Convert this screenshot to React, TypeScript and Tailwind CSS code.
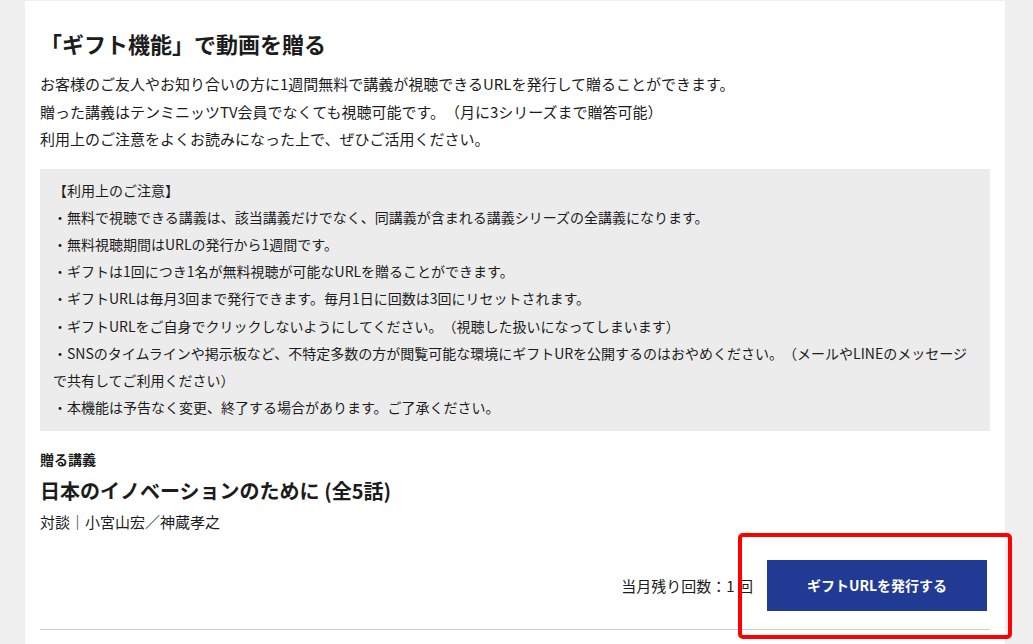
import React from 'react';

const notes = [
  '・無料で視聴できる講義は、該当講義だけでなく、同講義が含まれる講義シリーズの全講義になります。',
  '・無料視聴期間はURLの発行から1週間です。',
  '・ギフトは1回につき1名が無料視聴が可能なURLを贈ることができます。',
  '・ギフトURLは毎月3回まで発行できます。毎月1日に回数は3回にリセットされます。',
  '・ギフトURLをご自身でクリックしないようにしてください。（視聴した扱いになってしまいます）',
];

export default function App() {
  return (
    <div
      className="min-h-screen bg-[#f0f0f0] pt-px text-[#1c1c1c] [text-spacing-trim:space-all]"
      style={{ fontFamily: '"Noto Sans CJK JP", "Noto Sans", sans-serif' }}
    >
      <div className="relative ml-[25px] w-[980px] bg-white px-[15px] pt-[26px] pb-[20px]">
        <h2 className="text-[22px] font-bold leading-[32px]">「ギフト機能」で動画を贈る</h2>

        <div className="mt-[11px] text-[15px] leading-[27.5px]">
          <p>お客様のご友人やお知り合いの方に1週間無料で講義が視聴できるURLを発行して贈ることができます。</p>
          <p>贈った講義はテンミニッツTV会員でなくても視聴可能です。（月に3シリーズまで贈答可能）</p>
          <p>利用上のご注意をよくお読みになった上で、ぜひご活用ください。</p>
        </div>

        <div className="mt-[16px] bg-[#ececec] px-[13px] pt-[8px] pb-[10px] text-[14px] leading-[27.2px]">
          <p>【利用上のご注意】</p>
          {notes.map((n) => (
            <p key={n}>{n}</p>
          ))}
          <p>
            ・SNSのタイムラインや掲示板など、不特定多数の方が閲覧可能な環境にギフトURを公開するのはおやめください。（メールやLINEのメッセージ
            <br />
            で共有してご利用ください）
          </p>
          <p>・本機能は予告なく変更、終了する場合があります。ご了承ください。</p>
        </div>

        <div className="mt-[18px]">
          <p className="text-[14px] font-bold leading-[20px]">贈る講義</p>
          <p className="mt-[8px] text-[20px] font-bold leading-[28px]">日本のイノベーションのために (全5話)</p>
          <p className="mt-[5px] text-[15px] leading-[24px]">対談｜小宮山宏／神蔵孝之</p>
        </div>

        <div className="mt-[26px] flex items-center justify-end gap-[14px] pr-[3px]">
          <span className="text-[15px]">当月残り回数：1 回</span>
          <button
            type="button"
            className="h-[51px] w-[220px] bg-[#213a93] text-[14px] font-bold text-white"
          >
            ギフトURLを発行する
          </button>
        </div>

        <div className="mt-[18px] border-t border-[#cccccc]" />

        <div className="pointer-events-none absolute left-[713px] top-[532px] h-[106px] w-[274px] rounded-[5px] border-[4px] border-[#ff0000]" />
      </div>
    </div>
  );
}
